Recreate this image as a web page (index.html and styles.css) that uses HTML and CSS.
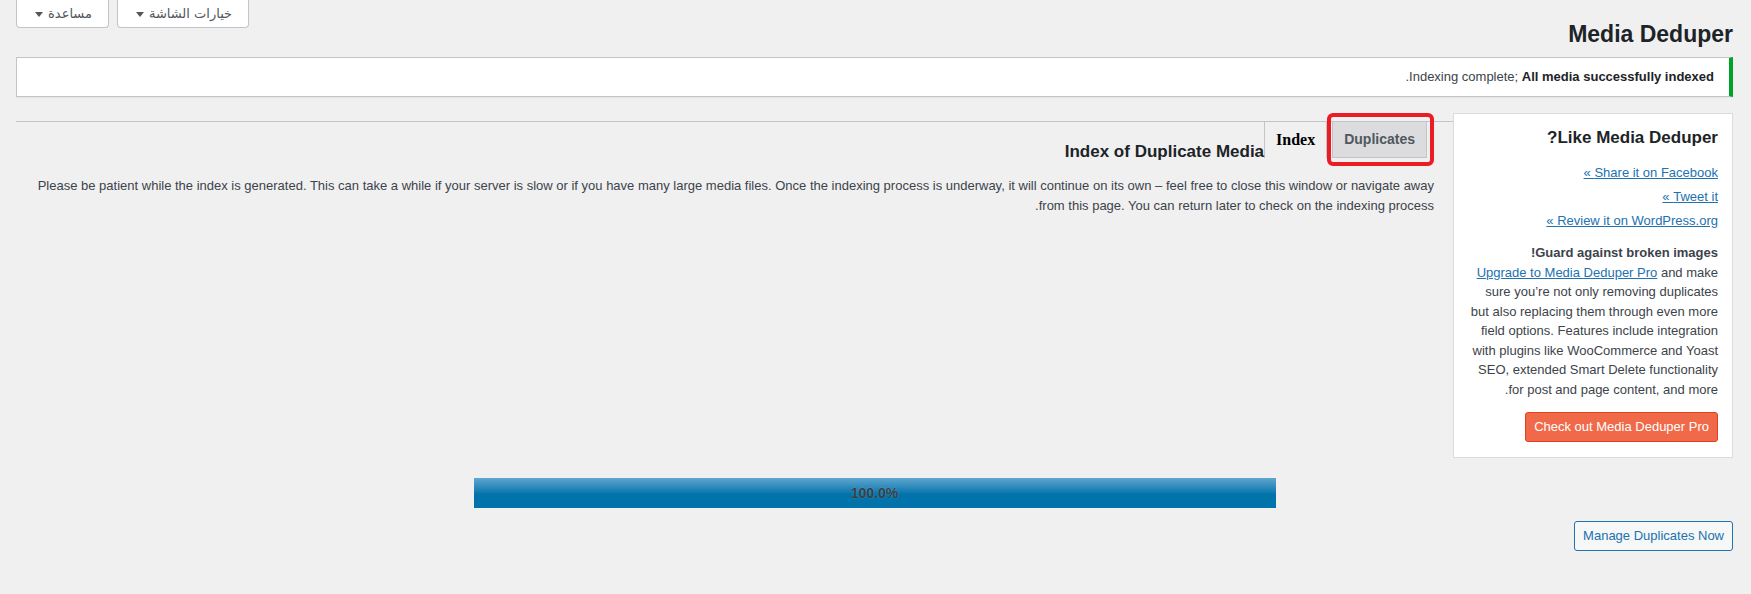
FILE: index.html
```html
<!DOCTYPE html>
<html lang="ar" dir="rtl">
<head>
  <meta charset="UTF-8" />
  <meta name="viewport" content="width=device-width, initial-scale=1.0" />
  <title>Media Deduper</title>
  <link rel="stylesheet" href="styles.css">
</head>
<body>
  <div class="wrap">
    <header class="page-header">
      <h1 class="page-title">Media Deduper</h1>
      <div class="screen-meta-links">
        <button class="meta-toggle">خيارات الشاشة<svg class="toggle-arrow" width="8" height="5" viewBox="0 0 8 5"><path d="M0 0h8L4 5z" /></svg></button>
        <button class="meta-toggle">مساعدة<svg class="toggle-arrow" width="8" height="5" viewBox="0 0 8 5"><path d="M0 0h8L4 5z" /></svg></button>
      </div>
    </header>

    <div class="notice notice-success">
      <p>Indexing complete; <strong>All media successfully indexed</strong>.</p>
    </div>

    <div class="columns">
      <aside class="sidebar">
        <h3 class="sidebar-title">Like Media Deduper?</h3>
        <ul class="share-links">
          <li><a href="#">Share it on Facebook »</a></li>
          <li><a href="#">Tweet it »</a></li>
          <li><a href="#">Review it on WordPress.org »</a></li>
        </ul>
        <p class="guard-title">Guard against broken images!</p>
        <p class="guard-text"><a href="#">Upgrade to Media Deduper Pro</a> and make sure you’re not only removing duplicates but also replacing them through even more field options. Features include integration with plugins like WooCommerce and Yoast SEO, extended Smart Delete functionality for post and page content, and more.</p>
        <a href="#" class="pro-button">Check out Media Deduper Pro</a>
      </aside>

      <main class="main-col">
        <div class="tab-row">
          <a href="#" class="nav-tab nav-tab-highlight">Duplicates</a>
          <a href="#" class="nav-tab nav-tab-active">Index</a>
          <h2 class="section-title">Index of Duplicate Media</h2>
        </div>
        <p class="intro">Please be patient while the index is generated. This can take a while if your server is slow or if you have many large media files. Once the indexing process is underway, it will continue on its own – feel free to close this window or navigate away from this page. You can return later to check on the indexing process.</p>
      </main>
    </div>

    <div class="progress-bar">
      <div class="progress-fill" style="width: 100%;">100.0%</div>
    </div>

    <div class="actions">
      <button class="button-secondary">Manage Duplicates Now</button>
    </div>
  </div>
</body>
</html>
```

FILE: styles.css
```css
body {
  margin: 0;
  background-color: #f0f0f1;
  font-family: "Liberation Sans", "DejaVu Sans", sans-serif;
  font-size: 13px;
  color: #3c434a;
}
.wrap {
  padding: 0 18px 0 16px;
}
a {
  color: #2271b1;
}
.page-header {
  display: flex;
  justify-content: space-between;
  align-items: flex-start;
}
.page-title {
  margin: 0;
  padding: 19px 0 4px;
  font-size: 23px;
  line-height: 30px;
  font-weight: 700;
  color: #1d2327;
}
.screen-meta-links {
  display: flex;
  gap: 8px;
}
.meta-toggle {
  display: flex;
  align-items: center;
  gap: 5px;
  height: 28px;
  box-sizing: border-box;
  padding: 0 16px 0 18px;
  background-color: #fff;
  border: 1px solid #c3c4c7;
  border-top: 0;
  border-radius: 0 0 4px 4px;
  color: #50575e;
  font-family: "DejaVu Sans", sans-serif;
  font-size: 13px;
  cursor: pointer;
}
.toggle-arrow {
  fill: #50575e;
  margin-top: 1px;
}
.notice {
  margin: 4px 0 16px;
  padding: 0 15px;
  background-color: #fff;
  border: 1px solid #c3c4c7;
  border-right: 4px solid #00a32a;
  box-shadow: 0 1px 1px rgba(0, 0, 0, 0.04);
}
.notice p {
  margin: 0;
  line-height: 38px;
}
.notice strong {
  color: #1d2327;
}
.columns {
  display: grid;
  grid-template-columns: 280px 1fr;
  align-items: start;
}
.sidebar {
  box-sizing: border-box;
  background-color: #fff;
  border: 1px solid #dcdcde;
  padding: 0 14px 15px;
}
.sidebar-title {
  margin: 12px 0;
  font-size: 17px;
  line-height: 23px;
  color: #1d2327;
}
.share-links {
  list-style: none;
  margin: 0;
  padding: 0;
}
.share-links li {
  line-height: 24px;
}
.guard-title {
  margin: 10px 0 0;
  line-height: 19.5px;
  font-weight: 700;
  color: #3c434a;
}
.guard-text {
  margin: 0;
  line-height: 19.5px;
}
.pro-button {
  display: inline-block;
  margin-top: 13px;
  height: 30px;
  box-sizing: border-box;
  padding: 0 8px;
  line-height: 28px;
  background-color: #f06a4a;
  border: 1px solid #e2401c;
  border-radius: 3px;
  color: #fff;
  text-decoration: none;
}
.main-col {
  margin-top: 8px;
  border-top: 1px solid #c3c4c7;
  padding-right: 19px;
}
.tab-row {
  display: flex;
  align-items: flex-start;
}
.nav-tab {
  display: block;
  height: 35px;
  padding: 0 11px;
  line-height: 35px;
  font-weight: 700;
  text-decoration: none;
}
.nav-tab-highlight {
  position: relative;
  margin-right: 7px;
  background-color: #dcdcde;
  border: 1px solid #c3c4c7;
  border-top: 0;
  color: #50575e;
  font-size: 14px;
}
.nav-tab-highlight::after {
  content: "";
  position: absolute;
  top: -9px;
  right: -8px;
  bottom: -9px;
  left: -6px;
  border: 4px solid #ec1c24;
  border-radius: 6px;
}
.nav-tab-active {
  height: 36px;
  margin-right: 5px;
  border-left: 1px solid #c3c4c7;
  border-right: 1px solid #c3c4c7;
  color: #000;
  font-family: "Liberation Serif", serif;
  font-size: 16px;
}
.section-title {
  margin: 19px 0 0;
  font-size: 17px;
  line-height: 22px;
  font-weight: 700;
  color: #1d2327;
}
.intro {
  margin: 13px 0 0;
  line-height: 20px;
}
.progress-bar {
  width: 802px;
  height: 30px;
  margin: 20px auto 0;
  background-color: #dcdcde;
}
.progress-fill {
  height: 100%;
  background: linear-gradient(to bottom, #5fa6ce 0%, #2f8abd 30%, #0073aa 55%, #0073aa 100%);
  text-align: center;
  line-height: 30px;
  font-size: 14px;
  font-weight: 700;
  color: #3a3f44;
  text-shadow: 0 0 2px rgba(255, 255, 255, 0.25);
}
.actions {
  display: flex;
  margin-top: 13px;
}
.button-secondary {
  height: 30px;
  box-sizing: border-box;
  padding: 0 8px;
  background-color: #f6f7f7;
  border: 1px solid #2271b1;
  border-radius: 3px;
  color: #2271b1;
  font-family: "Liberation Sans", sans-serif;
  font-size: 13px;
  line-height: 28px;
  cursor: pointer;
}
```
